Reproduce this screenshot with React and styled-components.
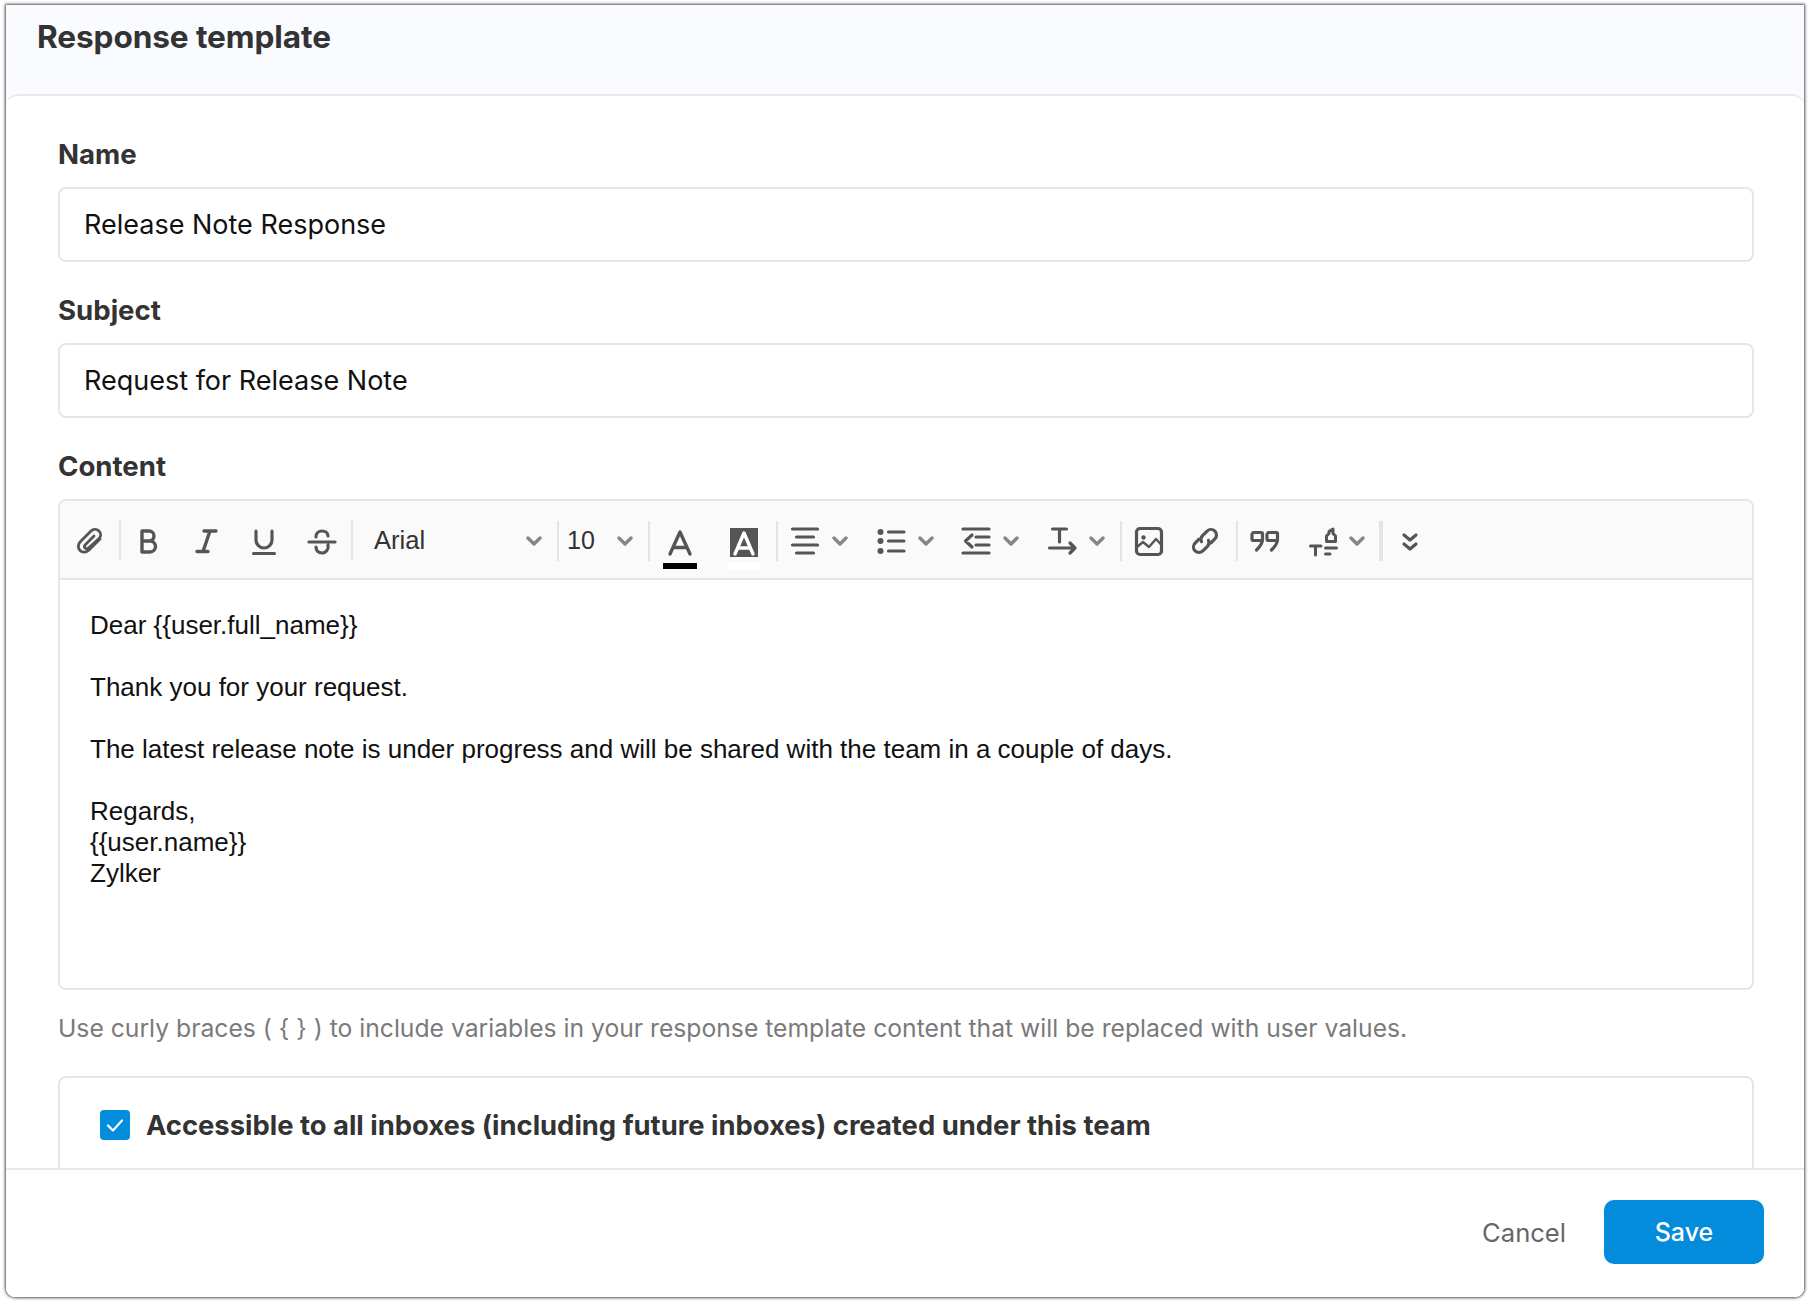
import React from "react";
import styled, { createGlobalStyle } from "styled-components";

const Global = createGlobalStyle`
  html, body { margin: 0; padding: 0; background: #fff; }
  #root { width: 1810px; height: 1304px; }
  * { box-sizing: border-box; }
`;

const Page = styled.div`
  width: 1810px;
  height: 1304px;
  padding: 5px 6px 7px 6px;
  background: #fff;
  font-family: Inter, "Liberation Sans", sans-serif;
`;

const Dialog = styled.div`
  height: 100%;
  display: flex;
  flex-direction: column;
  background: #f9fbff;
  border-radius: 0 0 9px 9px;
  box-shadow: 0 0 3px 1px rgba(0, 0, 0, 0.7);
  overflow: hidden;
`;

const Header = styled.header`
  height: 89px;
  flex: none;
  padding: 16px 0 0 31px;
`;

const Title = styled.h1`
  margin: 0;
  font-size: 31.6px;
  line-height: 32px;
  font-weight: 700;
  color: #333;
  letter-spacing: -0.1px;
`;

const Sheet = styled.div`
  flex: 1;
  min-height: 0;
  display: flex;
  flex-direction: column;
  background: #fff;
  border-top: 2px solid #e8e8e8;
  border-radius: 12px 12px 0 0;
`;

const Scroll = styled.div`
  flex: 1;
  min-height: 0;
  overflow: hidden;
  padding: 44px 50px 0 52px;
`;

const Field = styled.div`
  margin-bottom: 34px;
`;

const Label = styled.div`
  font-size: 27.6px;
  line-height: 28px;
  font-weight: 700;
  color: #333;
  margin-bottom: 19px;
`;

const TextInput = styled.div`
  height: 75px;
  display: flex;
  align-items: center;
  padding: 0 24px;
  border: 2px solid #e6e6e6;
  border-radius: 8px;
  font-size: 27px;
  color: #111;
`;

const Editor = styled.div`
  height: 491px;
  border: 2px solid #e6e6e6;
  border-radius: 8px;
  overflow: hidden;
`;

const Toolbar = styled.div`
  height: 79px;
  display: flex;
  align-items: center;
  padding-top: 2px;
  background: #fafafa;
  border-bottom: 2px solid #e6e6e6;
  font-family: "Liberation Sans", Arial, sans-serif;
`;

const Sep = styled.span`
  flex: none;
  width: ${(p) => p.$w || 2}px;
  height: 40px;
  background: #e4e4e4;
`;

const Slot = styled.div`
  flex: none;
  width: ${(p) => p.$w}px;
  display: flex;
  justify-content: center;
  align-items: center;
`;

const ColorSlot = styled.div`
  flex: none;
  width: ${(p) => p.$w}px;
  padding-left: ${(p) => p.$pl || 0}px;
  display: flex;
  flex-direction: column;
  align-items: center;
  gap: 7px;
  margin-top: 15px;
`;

const ColorBar = styled.span`
  width: 34px;
  height: 6px;
  background: ${(p) => p.$color};
`;

const Drop = styled.div`
  flex: none;
  width: ${(p) => p.$w}px;
  display: flex;
  align-items: center;
  padding-left: ${(p) => p.$pl}px;
  gap: ${(p) => p.$gap || 13}px;
`;

const Select = styled.div`
  flex: none;
  width: ${(p) => p.$w}px;
  display: flex;
  align-items: center;
  justify-content: space-between;
  padding: 0 15px 0 ${(p) => p.$pl}px;
  font-size: ${(p) => p.$size}px;
  color: #333;
`;

const Spacer = styled.span`
  flex: none;
  width: ${(p) => p.$w}px;
`;

const Content = styled.div`
  padding: 30px 0 0 30px;
  font-family: "Liberation Sans", Arial, sans-serif;
  font-size: 26px;
  line-height: 31px;
  color: #111;
`;

const Para = styled.p`
  margin: 0 0 31px;
`;

const Hint = styled.div`
  margin-top: 23px;
  font-size: 24.7px;
  line-height: 30px;
  color: #7a7a7a;
`;

const AccessBox = styled.div`
  margin-top: 33px;
  height: 120px;
  padding: 32px 0 0 40px;
  border: 2px solid #e6e6e6;
  border-radius: 8px;
  display: flex;
  align-items: flex-start;
  gap: 16px;
`;

const Check = styled.span`
  flex: none;
  width: 30px;
  height: 30px;
  border-radius: 4px;
  background: #048cdd;
  display: flex;
  align-items: center;
  justify-content: center;
`;

const CheckLabel = styled.span`
  font-size: 27.4px;
  line-height: 30px;
  font-weight: 700;
  color: #333;
`;

const Footer = styled.footer`
  flex: none;
  height: 129px;
  background: #fff;
  border-top: 2px solid #e8e8e8;
  display: flex;
  align-items: center;
  justify-content: flex-end;
  padding: 0 40px 3px 0;
  gap: 38px;
`;

const Cancel = styled.span`
  font-size: 25.6px;
  color: #666;
`;

const Save = styled.button`
  width: 160px;
  height: 64px;
  border: 0;
  border-radius: 10px;
  background: #038cdb;
  color: #fff;
  font: 500 25px Inter, "Liberation Sans", sans-serif;
`;

const Svg = ({ children, fill = "none", w = 3.2, vb = "0 0 28 28" }) => (
  <svg width="28" height="28" viewBox={vb} fill={fill} stroke="#555" strokeWidth={w} strokeLinecap="round" strokeLinejoin="round" style={{ overflow: "visible", display: "block", flex: "none" }}>
    {children}
  </svg>
);

const Chev = () => (
  <svg width="16" height="10" viewBox="0 0 16 10" fill="none" stroke="#868686" strokeWidth="3.4" strokeLinecap="round" strokeLinejoin="round" style={{ flex: "none", display: "block" }}>
    <path d="M2 2l6 6 6-6" />
  </svg>
);

const Clip = () => <Svg w={2.8}><path d="M24 12 L13 23 C10.5 25.5 6.5 26 4 23.5 C1.5 21 2 17 4.5 14.5 L15 4 C17 2 20.5 1.5 23 4 C25.5 6.5 25 9.5 23 11.5 L12.5 21 C11.5 22 10 22 9 21 C8 20 8.5 18.5 9.5 17.5 L18 9" /></Svg>;
const Bold = () => <Svg w={3.4}><path d="M6 4 V25 H14 a5.5 5.5 0 0 0 0 -11 H6 M6 14 H13 a5 5 0 0 0 0 -10 H6" /></Svg>;
const Italic = () => <Svg w={3.4}><path d="M11 4 H23 M4 24.5 H15 M17 4 L10 24.5" /></Svg>;
const Under = () => <Svg w={3.2}><path d="M5 4 V13 a8 8 0 0 0 16 0 V4 M2.5 26.5 H23.5" /></Svg>;
const Strike = () => <Svg w={3.2}><path d="M1 15 H27 M8 10 C8 6 11 4 14 4 C17 4 20 6 20 9 M20 18 C21 22 18 26 14 26 C10 26 8 23 8 20" /></Svg>;
const LetterA = () => <Svg w={3.4}><path d="M4 26 L14 4 L24 26 M7.5 19.5 H20.5" /></Svg>;
const LetterABg = () => (
  <Svg w={3.4}>
    <rect x="0" y="0" width="28" height="29" fill="#555" stroke="none" />
    <path d="M5 26 L14 5 L23 26 M8 20 H20" stroke="#fff" />
  </Svg>
);
const Align = () => <Svg><path d="M1.5 2 H26.5 M5.5 10 H22.5 M1.5 18 H26.5 M5.5 26 H22.5" /></Svg>;
const List = () => (
  <Svg>
    <path d="M11.5 5 H27 M11.5 14 H27 M11.5 24 H27" />
    <circle cx="3.5" cy="5" r="3" fill="#555" stroke="none" />
    <circle cx="3.5" cy="14" r="3" fill="#555" stroke="none" />
    <circle cx="3.5" cy="24" r="3" fill="#555" stroke="none" />
  </Svg>
);
const Indent = () => <Svg><path d="M1 2 H27 M14 10 H27 M14 18 H27 M1 26 H27 M10 8 L3.5 14 L10 20" /></Svg>;
const TextDir = () => <Svg><path d="M4.5 2 H18.5 M11.5 2 V15 M1.5 21 H27 M22 16 L27 21 L22 26" /></Svg>;
const Picture = () => (
  <Svg>
    <rect x="1.5" y="1.5" width="25" height="26" rx="3.5" />
    <path d="M2 20 L8 15 L14 20 L21 12 L26.5 18" strokeWidth="2.4" />
    <circle cx="8.5" cy="10.5" r="2.2" fill="#555" stroke="none" />
  </Svg>
);
const LinkIcon = () => (
  <Svg w={3.2}>
    <g transform="rotate(-45 14 14)">
      <path d="M11 8.5 H5.5 a5.5 5.5 0 0 0 0 11 H12 a5.5 5.5 0 0 0 5 -3.5" />
      <path d="M17 19.5 H22.5 a5.5 5.5 0 0 0 0 -11 H16 a5.5 5.5 0 0 0 -5 3.5" />
    </g>
  </Svg>
);
const Quote = () => (
  <Svg w={3.2}>
    <path d="M3 5.5 H11.5 Q12.5 5.5 12.5 7 V13 C12.5 17 9.5 20 6.5 23 M2 7 V12 Q2 13.5 3.5 13.5 H12" />
    <path d="M18 5.5 H26.5 Q27.5 5.5 27.5 7 V13 C27.5 17 24.5 20 21.5 23 M17 7 V12 Q17 13.5 18.5 13.5 H27" />
  </Svg>
);
const Highlight = () => (
  <Svg w={3}>
    <path d="M1.5 19 H12 M6.5 19 V28 M16.5 21 H27.5 M16.5 27 H21" />
    <path d="M17.5 14.5 H26.5 V9 L24 6.5 V2 L20 4.5 V6.5 L17.5 9 Z" />
  </Svg>
);
const More = () => <Svg w={3.2}><path d="M8 8 L14 13 L20 8 M8 17 L14 22 L20 17" /></Svg>;

export default function App() {
  return (
    <Page>
      <Global />
      <Dialog>
        <Header>
          <Title>Response template</Title>
        </Header>
        <Sheet>
          <Scroll>
            <Field>
              <Label>Name</Label>
              <TextInput>Release Note Response</TextInput>
            </Field>
            <Field>
              <Label>Subject</Label>
              <TextInput>Request for Release Note</TextInput>
            </Field>
            <Label>Content</Label>
            <Editor>
              <Toolbar>
                <Slot $w={59}><Clip /></Slot>
                <Sep />
                <Slot $w={57.5}><Bold /></Slot>
                <Slot $w={57.5}><Italic /></Slot>
                <Slot $w={57.5}><Under /></Slot>
                <Slot $w={57.5}><Strike /></Slot>
                <Sep />
                <Select $w={204} $pl={21} $size={25.6}>Arial<Chev /></Select>
                <Sep />
                <Select $w={89} $pl={8} $size={25}>10<Chev /></Select>
                <Sep />
                <ColorSlot $w={60}><LetterA /><ColorBar $color="#000" /></ColorSlot>
                <ColorSlot $w={66} $pl={2}><LetterABg /><ColorBar $color="#fff" /></ColorSlot>
                <Sep />
                <Drop $w={85.5} $pl={13}><Align /><Chev /></Drop>
                <Drop $w={85.5} $pl={13}><List /><Chev /></Drop>
                <Drop $w={85.5} $pl={13}><Indent /><Chev /></Drop>
                <Drop $w={85.5} $pl={13}><TextDir /><Chev /></Drop>
                <Sep />
                <Slot $w={53}><Picture /></Slot>
                <Slot $w={59}><LinkIcon /></Slot>
                <Spacer $w={2} />
                <Sep />
                <Slot $w={52}><Quote /></Slot>
                <Drop $w={89} $pl={19} $gap={12}><Highlight /><Chev /></Drop>
                <Sep $w={4} />
                <Slot $w={54}><More /></Slot>
              </Toolbar>
              <Content>
                <Para>Dear {"{{user.full_name}}"}</Para>
                <Para>Thank you for your request.</Para>
                <Para>The latest release note is under progress and will be shared with the team in a couple of days.</Para>
                <Para>
                  Regards,<br />
                  {"{{user.name}}"}<br />
                  Zylker
                </Para>
              </Content>
            </Editor>
            <Hint>Use curly braces ( {"{ }"} ) to include variables in your response template content that will be replaced with user values.</Hint>
            <AccessBox>
              <Check>
                <svg width="20" height="20" viewBox="0 0 20 20" fill="none" stroke="#fff" strokeWidth="2.2" strokeLinecap="round" strokeLinejoin="round">
                  <path d="M3 10.5l5 5 9-10" />
                </svg>
              </Check>
              <CheckLabel>Accessible to all inboxes (including future inboxes) created under this team</CheckLabel>
            </AccessBox>
          </Scroll>
          <Footer>
            <Cancel>Cancel</Cancel>
            <Save>Save</Save>
          </Footer>
        </Sheet>
      </Dialog>
    </Page>
  );
}
